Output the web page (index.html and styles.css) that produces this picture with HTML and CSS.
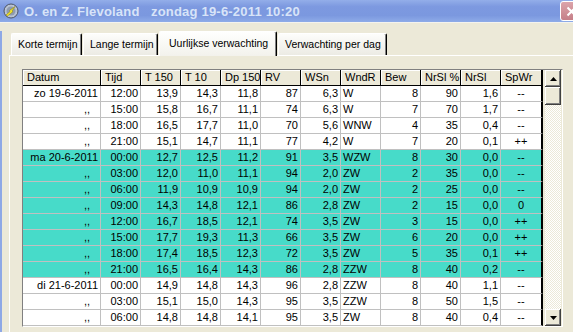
FILE: index.html
```html
<!doctype html>
<html>
<head>
<meta charset="utf-8">
<title>O. en Z. Flevoland</title>
<link rel="stylesheet" href="styles.css">
</head>
<body>
<div class="window">
	<div class="titlebar">
		<svg class="appicon" width="16" height="16" viewBox="0 0 16 16">
			<circle cx="8" cy="8" r="7" fill="#b9c3d3" stroke="#4c5466" stroke-width="1"/>
			<circle cx="8" cy="8" r="4.5" fill="#8f9bb0"/>
			<path d="M3 12 L7 8.5 L6.5 7.5 L12 3.5 L9 8 L10 8.6 L4.5 13 Z" fill="#f2e52c" stroke="#8a7d10" stroke-width="0.5"/>
		</svg>
		<span class="title">O. en Z. Flevoland   zondag 19-6-2011 10:20</span>
		<span class="close"><svg width="11" height="11" viewBox="0 0 11 11"><path d="M1.5 1.5 L9.5 9.5 M9.5 1.5 L1.5 9.5" stroke="#fff" stroke-width="2"/></svg></span>
	</div>
	<div class="body">
		<div class="tabs">
			<div class="tab t1">Korte termijn</div>
			<div class="tab t2">Lange termijn</div>
			<div class="tab t3 active">Uurlijkse verwachting</div>
			<div class="tab t4">Verwachting per dag</div>
		</div>
		<div class="sheet">
			<div class="grid">
				<table>
					<tr>
						<th class="c-date">Datum</th><th>Tijd</th><th>T 150</th><th>T 10</th><th>Dp 150</th><th>RV</th><th>WSn</th><th>WndR</th><th>Bew</th><th>NrSl %</th><th>NrSl</th><th class="last">SpWr</th>
					</tr>
					<tr><td>zo 19-6-2011</td><td>12:00</td><td>13,9</td><td>14,3</td><td>11,8</td><td>87</td><td>6,3</td><td>W</td><td>8</td><td>90</td><td>1,6</td><td>--</td></tr>
					<tr><td class="ditto">,,</td><td>15:00</td><td>15,8</td><td>16,7</td><td>11,1</td><td>74</td><td>6,3</td><td>W</td><td>7</td><td>70</td><td>1,7</td><td>--</td></tr>
					<tr><td class="ditto">,,</td><td>18:00</td><td>16,5</td><td>17,7</td><td>11,0</td><td>70</td><td>5,6</td><td>WNW</td><td>4</td><td>35</td><td>0,4</td><td>--</td></tr>
					<tr><td class="ditto">,,</td><td>21:00</td><td>15,1</td><td>14,7</td><td>11,1</td><td>77</td><td>4,2</td><td>W</td><td>7</td><td>20</td><td>0,1</td><td>++</td></tr>
					<tr class="hl"><td>ma 20-6-2011</td><td>00:00</td><td>12,7</td><td>12,5</td><td>11,2</td><td>91</td><td>3,5</td><td>WZW</td><td>8</td><td>30</td><td>0,0</td><td>--</td></tr>
					<tr class="hl"><td class="ditto">,,</td><td>03:00</td><td>12,0</td><td>11,0</td><td>11,1</td><td>94</td><td>2,0</td><td>ZW</td><td>2</td><td>35</td><td>0,0</td><td>--</td></tr>
					<tr class="hl"><td class="ditto">,,</td><td>06:00</td><td>11,9</td><td>10,9</td><td>10,9</td><td>94</td><td>2,0</td><td>ZW</td><td>2</td><td>25</td><td>0,0</td><td>--</td></tr>
					<tr class="hl"><td class="ditto">,,</td><td>09:00</td><td>14,3</td><td>14,8</td><td>12,1</td><td>86</td><td>2,8</td><td>ZW</td><td>2</td><td>15</td><td>0,0</td><td>0</td></tr>
					<tr class="hl"><td class="ditto">,,</td><td>12:00</td><td>16,7</td><td>18,5</td><td>12,1</td><td>74</td><td>3,5</td><td>ZW</td><td>3</td><td>15</td><td>0,0</td><td>++</td></tr>
					<tr class="hl"><td class="ditto">,,</td><td>15:00</td><td>17,7</td><td>19,3</td><td>11,3</td><td>66</td><td>3,5</td><td>ZW</td><td>6</td><td>20</td><td>0,0</td><td>++</td></tr>
					<tr class="hl"><td class="ditto">,,</td><td>18:00</td><td>17,4</td><td>18,5</td><td>12,3</td><td>72</td><td>3,5</td><td>ZW</td><td>5</td><td>35</td><td>0,1</td><td>++</td></tr>
					<tr class="hl"><td class="ditto">,,</td><td>21:00</td><td>16,5</td><td>16,4</td><td>14,3</td><td>86</td><td>2,8</td><td>ZZW</td><td>8</td><td>40</td><td>0,2</td><td>--</td></tr>
					<tr><td>di 21-6-2011</td><td>00:00</td><td>14,9</td><td>14,8</td><td>14,3</td><td>96</td><td>2,8</td><td>ZZW</td><td>8</td><td>40</td><td>1,1</td><td>--</td></tr>
					<tr><td class="ditto">,,</td><td>03:00</td><td>15,1</td><td>15,0</td><td>14,3</td><td>95</td><td>3,5</td><td>ZZW</td><td>8</td><td>50</td><td>1,5</td><td>--</td></tr>
					<tr><td class="ditto">,,</td><td>06:00</td><td>14,8</td><td>14,8</td><td>14,1</td><td>95</td><td>3,5</td><td>ZW</td><td>8</td><td>40</td><td>0,4</td><td>--</td></tr>
				</table>
				<div class="scrollbar">
					<div class="sbtn"><svg width="7" height="4" viewBox="0 0 7 4"><path d="M3.5 0 L7 4 L0 4 Z" fill="#000"/></svg></div>
					<div class="thumb"></div>
					<div class="track"></div>
					<div class="sbtn"><svg width="7" height="4" viewBox="0 0 7 4"><path d="M0 0 L7 0 L3.5 4 Z" fill="#000"/></svg></div>
				</div>
			</div>
		</div>
	</div>
</div>
</body>
</html>
```
FILE: styles.css
```css
*{box-sizing:border-box;}
html,body{margin:0; padding:0;}
body{overflow:hidden; background:#ECE9D8; font-family:"Liberation Sans",Arial,sans-serif; font-size:11px; color:#000;}
.window{width:573px; height:332px; overflow:hidden; background:#ECE9D8;}

.titlebar{height:23px; display:flex; align-items:center; padding-left:3px; overflow:hidden; border-bottom:1px solid #f4f3ee;
	background:linear-gradient(#93aee9,#7d99e0 30%,#7b98df 70%,#8eabe8);}
.appicon{flex:none;}
.title{margin-left:5px; color:#d8e4f8; font-weight:bold; font-size:13px; white-space:pre; letter-spacing:0.2px;}
.close{margin-left:auto; margin-right:-9px; flex:none; width:22px; height:20px; border:1px solid #fff; border-radius:3px;
	background:linear-gradient(#dca4aa,#c57f88); display:flex; align-items:center; justify-content:center;}

.body{border-left:2px solid #8ea8e6; height:309px;}

.tabs{display:flex; align-items:flex-end; height:25px; margin-top:8px; padding-left:9px; margin-bottom:-1px;}
.tab{height:22px; margin-bottom:1px; margin-right:1px; padding-left:6px; line-height:21px; white-space:nowrap; font-size:10.5px;
	border-top:1px solid #fff; border-left:1px solid #fff; border-right:1px solid #000; border-radius:2px 2px 0 0;
	box-shadow:inset -1px 0 #808080; background:linear-gradient(#fdfdfb,#ecebe4);}
.t1{width:71px;}
.t2{width:75px;}
.t3{width:118px;}
.t4{width:109px;}
.tab.active{height:25px; margin-bottom:0; padding-left:9px; line-height:22px; position:relative; z-index:1; background:linear-gradient(#fffffe,#f3f2ec);}

.sheet{margin-left:7px; border-top:1px solid #fff; border-left:1px solid #fff; padding:13px 0 0 12px; height:300px;}

.grid{display:flex; width:541px; height:258px; border:1px solid; border-color:#808080 #fff #fff #808080; background:#fff;}
table{border-collapse:separate; border-spacing:0; table-layout:fixed; width:520px; flex:none;}
th,td{height:16px; padding:0 2px; line-height:15px; white-space:nowrap; overflow:hidden; border-right:1px solid #c0c0c0; border-bottom:1px solid #c0c0c0; text-align:right; font-weight:normal;}
th{width:40px; text-align:left; padding-left:4px; background:#ECE9D8; border-right-color:#000; border-bottom-color:#000; box-shadow:inset 1px 1px #fff;}
th.c-date{width:78px;}
th.last{width:42px;}
td:last-child,th:last-child{border-right:2px solid #000;}
td:nth-child(8){text-align:left;}
td:last-child{text-align:center;}
td.ditto{padding-right:10px;}
tr.hl td{background:#47dbc9;}

.scrollbar{flex:1; display:flex; flex-direction:column; padding:0 1px 0 2px; background:#ECE9D8;}
.sbtn{height:17px; flex:none; display:flex; align-items:center; justify-content:center; background:#ECE9D8;
	box-shadow:inset -1px -1px #404040, inset 1px 1px #fff, inset -2px -2px #808080;}
.thumb{height:18px; flex:none; background:#ECE9D8; box-shadow:inset -1px -1px #404040, inset 1px 1px #fff, inset -2px -2px #808080;}
.track{flex:1; background:repeating-conic-gradient(#fff 0 25%,#ECE9D8 0 50%) 0 0/2px 2px;}
```
